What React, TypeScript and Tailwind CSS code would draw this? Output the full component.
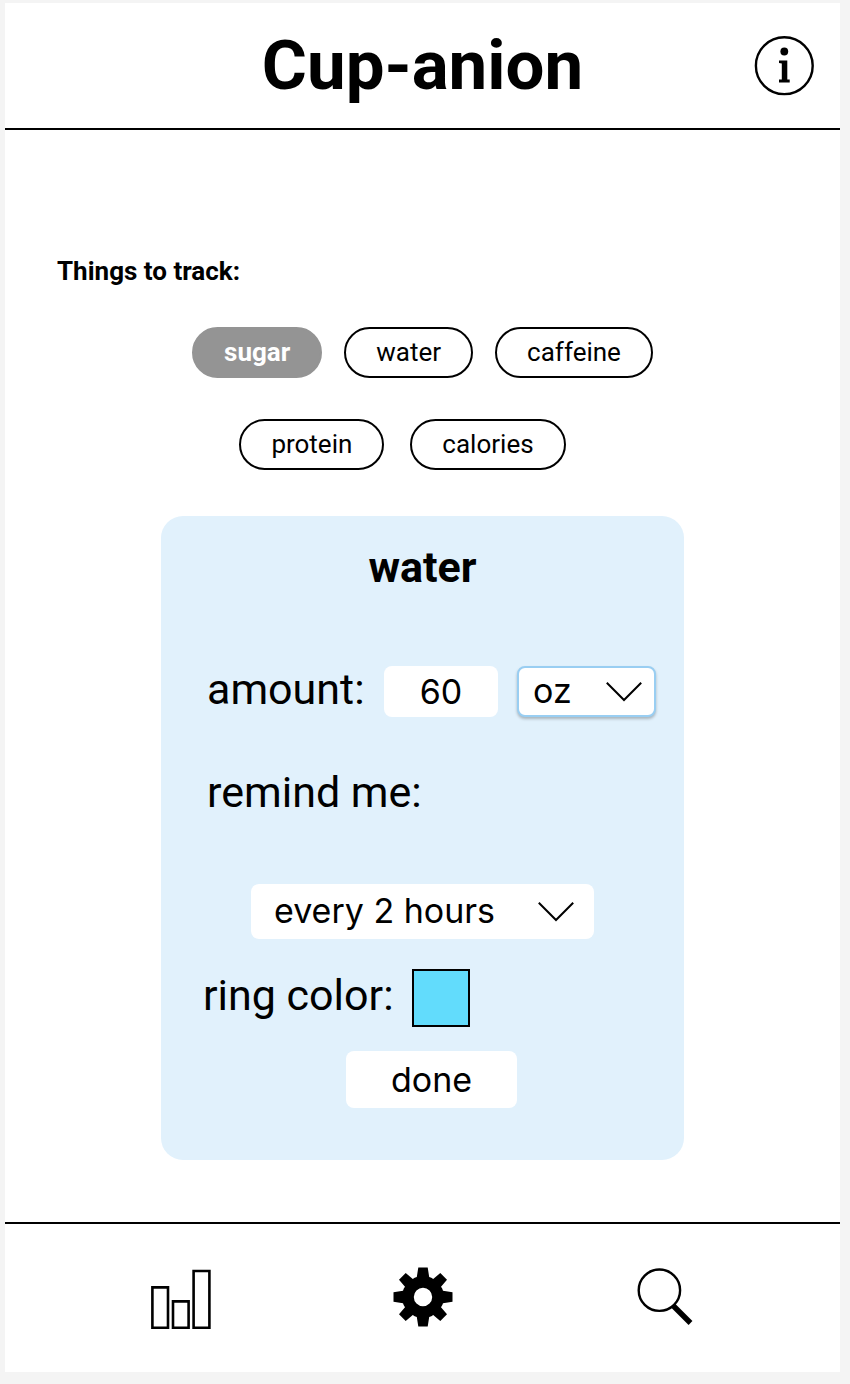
import { useState } from "react";
import type { ReactNode } from "react";

const trackables = [
  ["sugar", "water", "caffeine"],
  ["protein", "calories"],
];

function Pill({ label, active, onClick }: { label: string; active: boolean; onClick: () => void }) {
  return (
    <button
      type="button"
      aria-pressed={active}
      onClick={onClick}
      className={
        active
          ? "h-[51px] rounded-full border-2 border-[#949494] bg-[#949494] px-[30px] pb-0.5 text-[26px] leading-8 font-bold text-white"
          : "h-[51px] rounded-full border-2 border-black bg-white px-[30px] pb-0.5 text-[26px] leading-8 text-black"
      }
    >
      {label}
    </button>
  );
}

function Chevron({ className }: { className: string }) {
  return (
    <svg
      viewBox="0 0 36 20"
      aria-hidden="true"
      className={`pointer-events-none absolute top-1/2 h-5 w-9 -translate-y-1/2 ${className}`}
      fill="none"
      stroke="black"
      strokeWidth="2"
    >
      <path d="M0.8 0.8 18 18 35.2 0.8" />
    </svg>
  );
}

function NavButton({ label, children }: { label: string; children: ReactNode }) {
  return (
    <button type="button" aria-label={label} className="h-[60px] w-[60px]">
      {children}
    </button>
  );
}

export default function App() {
  const [selected, setSelected] = useState("sugar");
  const [color, setColor] = useState("#62dcfc");

  return (
    <div className="flex min-h-screen flex-col bg-[#f4f4f4] pt-[3px] pr-[10px] pb-3 pl-[5px] font-[Roboto,sans-serif] text-black">
      <div className="flex flex-1 flex-col bg-white">
        <header className="grid grid-cols-[1fr_auto_1fr] items-center border-b-2 border-black px-[26px] pt-[23px] pb-[22px]">
          <h1 className="col-start-2 text-[69px] leading-[80px] font-bold">Cup-anion</h1>
          <button type="button" aria-label="Information" className="h-[60px] w-[60px] justify-self-end">
            <svg viewBox="0 0 60 60" className="h-full w-full">
              <circle cx="30.3" cy="29.7" r="28.4" fill="none" stroke="black" strokeWidth="2.4" />
              <circle cx="30.3" cy="15.5" r="3.9" />
              <path d="M25 24.4H33.3V43.4L35.7 43.6V46.6H25V43.6L27.8 43.4V27.4L25 27.1Z" />
            </svg>
          </button>
        </header>

        <main className="flex flex-1 flex-col items-center pt-[125px] pb-[60px]">
          <h2 className="self-stretch pl-[52px] text-[26px] leading-8 font-bold">Things to track:</h2>
          <div className="mt-10 flex flex-col items-center gap-[41px]">
            <div className="flex gap-[22px]">
              {trackables[0].map((t) => (
                <Pill key={t} label={t} active={selected === t} onClick={() => setSelected(t)} />
              ))}
            </div>
            <div className="flex gap-[26px] pr-10">
              {trackables[1].map((t) => (
                <Pill key={t} label={t} active={selected === t} onClick={() => setSelected(t)} />
              ))}
            </div>
          </div>

          <form
            onSubmit={(e) => e.preventDefault()}
            className="mt-[46px] flex w-full max-w-[523px] flex-col rounded-[22px] bg-[#e1f1fc] pt-[25px] pb-[52px] text-[43px] leading-[52px]"
          >
            <h2 className="text-center font-bold">water</h2>

            <div className="mt-[73px] flex items-center pl-[46px]">
              <label htmlFor="amount" className="-my-1 w-[177px] pb-1.5">
                amount:
              </label>
              <input
                id="amount"
                type="text"
                inputMode="numeric"
                defaultValue="60"
                className="h-[51px] w-[114px] rounded-lg bg-white text-center font-[Inter,sans-serif] text-[34px] leading-[44px]"
              />
              <div className="relative ml-[19px]">
                <select
                  aria-label="Unit"
                  className="block h-[51px] w-[139px] appearance-none rounded-lg border-2 border-[#99cef2] bg-white pb-0.5 pl-[14px] font-[Inter,sans-serif] text-[34px] leading-[44px] shadow-[0_2px_3px_rgba(0,0,0,0.25)]"
                >
                  <option>oz</option>
                  <option>ml</option>
                </select>
                <Chevron className="right-[14px]" />
              </div>
            </div>

            <label htmlFor="reminder" className="mt-[49px] pl-[46px]">
              remind me:
            </label>
            <div className="relative mt-[66px] self-center">
              <select
                id="reminder"
                className="block h-[55px] w-[343px] appearance-none rounded-lg bg-white pb-0.5 pl-[23px] font-[Inter,sans-serif] text-[34px] leading-[44px]"
              >
                <option>every 2 hours</option>
                <option>every 4 hours</option>
              </select>
              <Chevron className="right-5" />
            </div>

            <div className="mt-[30px] flex items-center pl-[42px]">
              <label htmlFor="ring" className="w-[209px] pb-1.5">
                ring color:
              </label>
              <input
                id="ring"
                type="color"
                value={color}
                onChange={(e) => setColor(e.target.value)}
                className="block h-[58px] w-[58px] appearance-none border-2 border-black p-0 [&::-webkit-color-swatch]:rounded-none [&::-webkit-color-swatch]:border-none [&::-webkit-color-swatch-wrapper]:p-0"
              />
            </div>

            <button
              type="submit"
              className="mt-6 ml-[18px] h-[57px] w-[171px] self-center rounded-lg bg-white font-[Inter,sans-serif] text-[34px] leading-[44px]"
            >
              done
            </button>
          </form>
        </main>

        <nav className="flex items-center justify-between border-t-2 border-black px-[146px] pt-[44px] pb-[44px]">
          <NavButton label="Statistics">
            <svg
              viewBox="0 0 60 60"
              className="h-full w-full overflow-visible"
              fill="none"
              stroke="black"
              strokeWidth="2.6"
            >
              <path d="M1.4 19.4H17V59.8H1.4ZM22 33.4H37.6V59.8H22ZM42.6 3H58.4V59.8H42.6Z" />
            </svg>
          </NavButton>
          <NavButton label="Settings">
            <svg viewBox="0 1 60 60" className="h-full w-full overflow-visible">
              <path
                fillRule="evenodd"
                d="M25.3 0.5H34.7L36.2 10Q38.5 10.6 40.2 12L47.3 6 54 12.7 48 19.8Q49.4 21.5 50 23.8L59.5 25.3V34.7L50 36.2Q49.4 38.5 48 40.2L54 47.3 47.3 54 40.2 48Q38.5 49.4 36.2 50L34.7 59.5H25.3L23.8 50Q21.5 49.4 19.8 48L12.7 54 6 47.3 12 40.2Q10.6 38.5 10 36.2L0.5 34.7V25.3L10 23.8Q10.6 21.5 12 19.8L6 12.7 12.7 6 19.8 12Q21.5 10.6 23.8 10ZM30 20.8A9.2 9.2 0 1 0 30 39.2A9.2 9.2 0 1 0 30 20.8Z"
              />
            </svg>
          </NavButton>
          <NavButton label="Search">
            <svg viewBox="0 0 60 60" className="h-full w-full" fill="none" stroke="black">
              <circle cx="25.4" cy="22.2" r="20.7" strokeWidth="2.4" />
              <path d="M39 37.5 56.5 55" strokeWidth="5.4" />
            </svg>
          </NavButton>
        </nav>
      </div>
    </div>
  );
}
